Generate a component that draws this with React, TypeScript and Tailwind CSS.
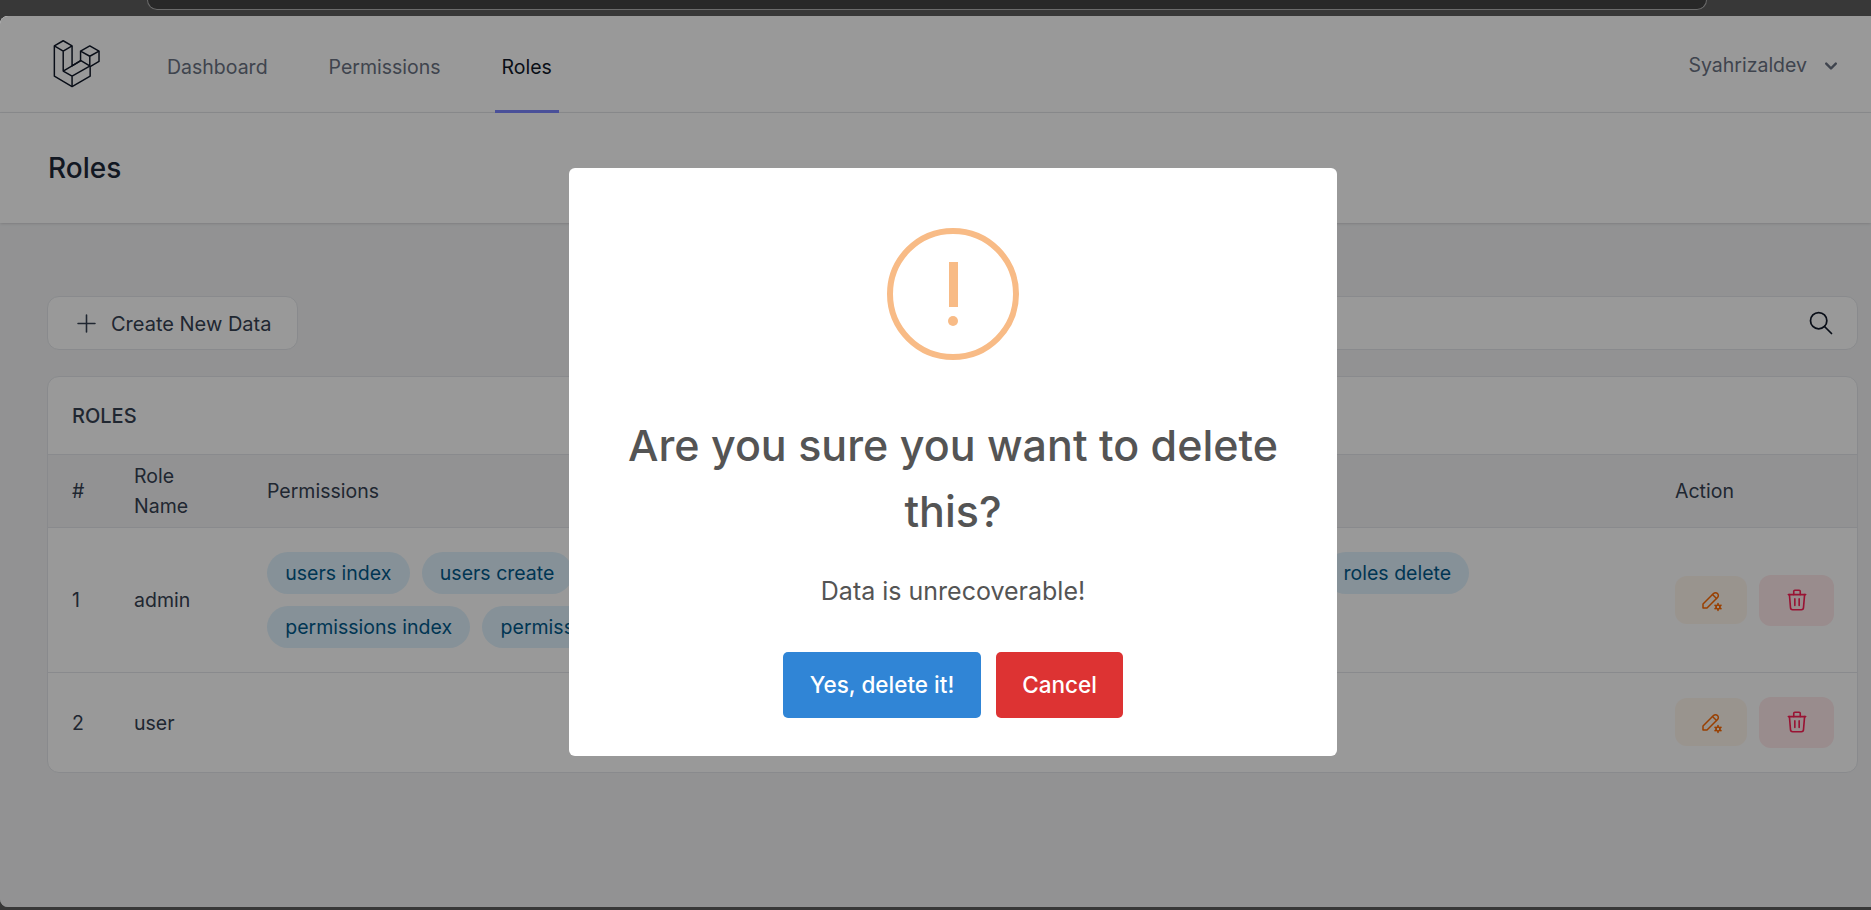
import { TbPencilCog, TbPlus, TbSearch, TbTrash } from 'react-icons/tb';

const permissions = [
  'users index',
  'users create',
  'users edit',
  'users delete',
  'roles index',
  'roles create',
  'roles edit',
  'roles delete',
  'permissions index',
  'permissions create',
  'permissions edit',
  'permissions delete',
];

function Logo() {
  return (
    <svg viewBox="0 0 62 65" className="h-12 w-[47px] shrink-0 text-gray-900" fill="none" stroke="currentColor" strokeWidth="2" strokeLinejoin="round">
      <path d="M13 1 1 8v41l24 14 24.5-14V36l12-7V15L49 8l-12.5 7v13L25 35V8Z" />
      <path d="M1 8l12 7 12-7M13 15v27l12 7 24.5-14M13 42l24-14 12.5 7.500M25 49v14M36.500 15 49 22l12.500-7M49 22v14" />
    </svg>
  );
}

function ActionButtons() {
  return (
    <div className="flex items-center gap-3">
      <button className="flex h-12 w-[72px] items-center justify-center rounded-xl bg-orange-50 text-orange-500">
        <TbPencilCog className="size-6" strokeWidth={1.5} />
      </button>
      <button className="flex h-[51px] w-[75px] items-center justify-center rounded-xl bg-[#ffe9eb] text-rose-500">
        <TbTrash className="size-[26px]" strokeWidth={1.5} />
      </button>
    </div>
  );
}

export default function App() {
  return (
    <div className="h-[910px] overflow-hidden bg-[#383838] pt-4 font-['Inter',sans-serif]">
      {/* browser address bar peeking in at the top */}
      <div className="absolute left-[147px] top-0 h-[10px] w-[1560px] rounded-b-2xl border border-t-0 border-[#6b6b6b] bg-[#282828]" />

      <div className="relative h-[891px] overflow-hidden rounded-l-lg bg-gray-100">
        <nav className="flex h-[97px] items-center justify-between border-b border-gray-200 bg-white pl-[53px] pr-[28px]">
          <div className="flex h-full items-center">
            <Logo />
            <div className="ml-[67px] flex h-full items-center gap-[61px] pt-[7px] text-[19.500px] text-gray-500">
              <a>Dashboard</a>
              <a>Permissions</a>
              <a className="relative flex h-full items-center text-gray-900">
                Roles
                <span className="absolute -inset-x-[7px] -bottom-px h-[3px] bg-indigo-400" />
              </a>
            </div>
          </div>
          <div className="flex items-center gap-3 pt-1 text-[19.500px] text-gray-500">
            <span>Syahrizaldev</span>
            <svg viewBox="0 0 20 20" className="size-6 fill-current">
              <path fillRule="evenodd" clipRule="evenodd" d="M5.293 7.293a1 1 0 011.414 0L10 10.586l3.293-3.293a1 1 0 111.414 1.414l-4 4a1 1 0 01-1.414 0l-4-4a1 1 0 010-1.414z" />
            </svg>
          </div>
        </nav>

        <header className="flex h-[110px] items-center bg-white pl-12 shadow">
          <h2 className="text-[28px] font-medium text-gray-800">Roles</h2>
        </header>

        <main className="pl-[47px] pr-[13px] pt-[73px]">
          <div className="flex items-center justify-between">
            <button className="flex h-[54px] w-[251px] items-center gap-[10px] rounded-xl border border-gray-200 bg-white pl-[24px] text-[20px] text-gray-700">
              <TbPlus className="size-[29px]" strokeWidth={1.3} />
              <span className="pt-0.5">Create New Data</span>
            </button>
            <div className="flex h-[54px] w-[760px] items-center justify-end rounded-xl border border-gray-200 bg-white pr-[22px] text-gray-900">
              <TbSearch className="size-7" strokeWidth={1.5} />
            </div>
          </div>

          <div className="mt-[26px] overflow-hidden rounded-xl border border-gray-200 bg-white">
            <h3 className="flex h-[77px] items-center px-6 text-[20px] font-medium uppercase text-gray-700">Roles</h3>
            <table className="w-full table-fixed text-left text-[19.500px] text-gray-700">
              <thead>
                <tr className="h-[73px] border-y border-gray-200 bg-gray-100">
                  <th className="w-[62px] pl-6 pt-0.5 font-normal">#</th>
                  <th className="w-[133px] pl-6 pr-10 font-normal leading-[30px]">Role Name</th>
                  <th className="pl-6 pt-0.5 font-normal">Permissions</th>
                  <th className="w-[206px] pl-6 pt-0.5 font-normal">Action</th>
                </tr>
              </thead>
              <tbody>
                <tr className="h-[144px] border-b border-gray-200">
                  <td className="pl-6 pt-0.5">1</td>
                  <td className="pl-6 pt-0.5">admin</td>
                  <td className="px-6 py-6">
                    <div className="flex flex-wrap gap-3">
                      {permissions.map((permission) => (
                        <span key={permission} className="flex h-[42px] items-center rounded-full bg-sky-100 px-[18.250px] pt-0.5 text-sky-800">
                          {permission}
                        </span>
                      ))}
                    </div>
                  </td>
                  <td className="pl-6"><ActionButtons /></td>
                </tr>
                <tr className="h-[99px]">
                  <td className="pl-6 pt-0.5">2</td>
                  <td className="pl-6 pt-0.5">user</td>
                  <td className="px-6" />
                  <td className="pl-6"><ActionButtons /></td>
                </tr>
              </tbody>
            </table>
          </div>
        </main>

        {/* SweetAlert style confirm dialog */}
        <div className="absolute inset-0 bg-black/40">
          <div className="absolute left-[569px] top-[152px] flex h-[588px] w-[768px] flex-col items-center rounded-md bg-white">
            <div className="mt-[60px] flex size-[132px] flex-col items-center rounded-full border-[6px] border-[#f8bb86] pt-[28px]">
              <span className="h-[45px] w-[9px] bg-[#f8bb86]" />
              <span className="mt-[9px] size-[10px] rounded-full bg-[#f8bb86]" />
            </div>
            <h2 className="mt-[52px] px-12 text-center text-[43px] font-[550] leading-[66px] text-[#545454]">
              Are you sure you want to delete this?
            </h2>
            <p className="mt-[29px] text-[25px] text-[#545454]">Data is unrecoverable!</p>
            <div className="mt-[41px] flex gap-[15px]">
              <button className="h-[66px] w-[198px] rounded-[5px] bg-[#3085d6] text-[22.500px] font-medium text-white">Yes, delete it!</button>
              <button className="h-[66px] w-[127px] rounded-[5px] bg-[#dd3333] text-[22.500px] font-medium text-white">Cancel</button>
            </div>
          </div>
        </div>
      </div>
    </div>
  );
}
